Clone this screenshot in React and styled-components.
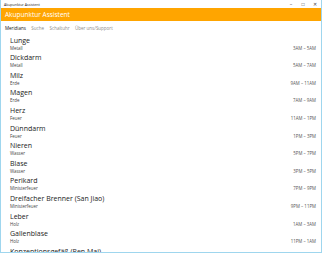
import React from 'react';
import styled, { createGlobalStyle } from 'styled-components';

const GlobalStyle = createGlobalStyle`
  html, body {
    margin: 0;
    padding: 0;
    background: #fff;
    font-family: "Open Sans", "Noto Sans", sans-serif;
    overflow: hidden;
  }
`;

const meridians = [
  { name: 'Lunge', element: 'Metall', time: '3AM – 5AM' },
  { name: 'Dickdarm', element: 'Metall', time: '5AM – 7AM' },
  { name: 'Milz', element: 'Erde', time: '9AM – 11AM' },
  { name: 'Magen', element: 'Erde', time: '7AM – 9AM' },
  { name: 'Herz', element: 'Feuer', time: '11AM – 1PM' },
  { name: 'Dünndarm', element: 'Feuer', time: '1PM – 3PM' },
  { name: 'Nieren', element: 'Wasser', time: '5PM – 7PM' },
  { name: 'Blase', element: 'Wasser', time: '3PM – 5PM' },
  { name: 'Perikard', element: 'Ministerfeuer', time: '7PM – 9PM' },
  { name: 'Dreifacher Brenner (San Jiao)', element: 'Ministerfeuer', time: '9PM – 11PM' },
  { name: 'Leber', element: 'Holz', time: '1AM – 3AM' },
  { name: 'Gallenblase', element: 'Holz', time: '11PM – 1AM' },
  { name: 'Konzeptionsgefäß (Ren Mai)', element: '', time: '' },
];

const tabs = ['Meridians', 'Suche', 'Schaltuhr', 'Über uns/Support'];

const Window = styled.div`
  width: 322px;
  height: 253px;
  box-sizing: border-box;
  border: 1px solid #9fd6ee;
  border-top: none;
  display: flex;
  flex-direction: column;
  overflow: hidden;
`;

const TitleBar = styled.div`
  height: 8px;
  flex: none;
  display: flex;
  align-items: center;
  padding-left: 3px;
  font-size: 3.6px;
  color: #222;
`;

const Caption = styled.div`
  flex: 1;
`;

const WinButton = styled.div`
  width: 12px;
  display: flex;
  justify-content: center;
  align-items: center;
  color: #444;
  font-size: 5px;
`;

const Header = styled.div`
  height: 13px;
  flex: none;
  background: #ffa500;
  color: #fff;
  font-size: 6.5px;
  display: flex;
  align-items: center;
  padding-left: 4px;
`;

const TabBar = styled.div`
  height: 13px;
  flex: none;
  display: flex;
  align-items: center;
  gap: 5.5px;
  padding-left: 4px;
  font-size: 4.5px;
`;

const Tab = styled.div`
  color: ${p => (p.$active ? '#111' : '#8a8a8a')};
`;

const List = styled.div`
  flex: 1;
  padding: 0 5px 0 9px;
  overflow: hidden;
`;

const Row = styled.div`
  height: 17.6px;
  display: flex;
  align-items: flex-end;
  justify-content: space-between;
  padding-bottom: 1px;
  box-sizing: border-box;
`;

const Names = styled.div`
  display: flex;
  flex-direction: column;
`;

const Name = styled.div`
  font-size: 7px;
  line-height: 8px;
  color: #1a1a1a;
`;

const Element = styled.div`
  font-size: 4.4px;
  line-height: 6px;
  color: #444;
`;

const Time = styled.div`
  font-size: 4.4px;
  line-height: 6px;
  color: #555;
`;

export default function App() {
  return (
    <>
      <GlobalStyle />
      <Window>
        <TitleBar>
          <Caption>Akupunktur Assistent</Caption>
          <WinButton>–</WinButton>
          <WinButton>□</WinButton>
          <WinButton>✕</WinButton>
        </TitleBar>
        <Header>Akupunktur Assistent</Header>
        <TabBar>
          {tabs.map((t, i) => (
            <Tab key={t} $active={i === 0}>{t}</Tab>
          ))}
        </TabBar>
        <List>
          {meridians.map(m => (
            <Row key={m.name}>
              <Names>
                <Name>{m.name}</Name>
                <Element>{m.element || '\u00a0'}</Element>
              </Names>
              <Time>{m.time}</Time>
            </Row>
          ))}
        </List>
      </Window>
    </>
  );
}
